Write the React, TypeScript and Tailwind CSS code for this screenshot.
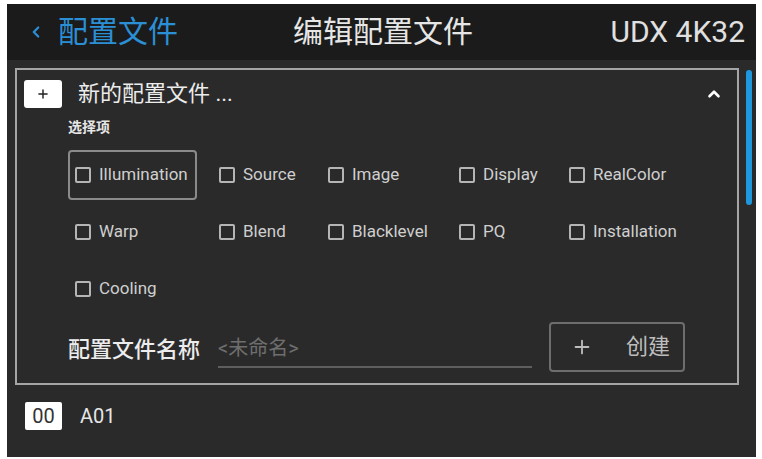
import { ChevronLeft, ChevronUp, Plus } from 'lucide-react';

const font = { fontFamily: 'Roboto, "Noto Sans CJK SC", sans-serif' };

const options = [
  'Illumination',
  'Source',
  'Image',
  'Display',
  'RealColor',
  'Warp',
  'Blend',
  'Blacklevel',
  'PQ',
  'Installation',
  'Cooling'
];

function Option({ label, focused }: { label: string; focused?: boolean }) {
  return (
    <div
      className={`flex h-[50px] items-center gap-[8px] rounded-[4px] border-2 pl-[5px] pr-[7px] ${
        focused ? 'border-[#8a8a8a]' : 'border-transparent'
      }`}
    >
      <span className="h-[16px] w-[16px] shrink-0 rounded-[2px] border-2 border-[#b5b5b5]" />
      <span className="text-[17px] text-[#cfcfcf]">{label}</span>
    </div>
  );
}

export default function App() {
  return (
    <div className="h-[459px] w-[762px] bg-white pl-[7px] pt-[4px]" style={font}>
      <div className="flex h-[453px] w-[749px] flex-col bg-[#2a2a2a]">
        {/* header */}
        <div className="grid h-[56px] grid-cols-[1fr_auto_1fr] items-center bg-[#1b1b1b] pl-[20px] pr-[11px]">
          <div className="flex items-center gap-[13px] text-[#2b8fd6]">
            <ChevronLeft size={18} strokeWidth={3} />
            <span className="text-[30px] leading-none">配置文件</span>
          </div>
          <div className="-ml-[6px] text-[30px] leading-none text-[#e6e6e6]">编辑配置文件</div>
          <span className="justify-self-end text-[30px] leading-none text-[#e0e0e0]">UDX 4K32</span>
        </div>

        {/* body */}
        <div className="flex pl-[8px] pt-[8px]">
          <div className="flex h-[317px] w-[724px] flex-col border-2 border-[#a5a5a5] pl-[7px] pr-[14px] pt-[10px]">
            <div className="flex items-center">
              <div className="flex h-[28px] w-[38px] items-center justify-center rounded-[3px] bg-white text-[#222]">
                <Plus size={14} strokeWidth={2.5} />
              </div>
              <span className="ml-[16px] text-[22px] leading-none text-[#ececec]">新的配置文件 ...</span>
              <ChevronUp size={18} strokeWidth={3.5} className="ml-auto text-white" />
            </div>
            <div className="ml-[44px] mt-[12px] text-[14px] font-bold leading-none text-[#e6e6e6]">选择项</div>
            <div className="ml-[44px] mt-[16px] grid grid-cols-[144px_109px_131px_110px_auto] justify-items-start gap-y-[7px]">
              {options.map((o, i) => (
                <Option key={o} label={o} focused={i === 0} />
              ))}
            </div>
            <div className="ml-[44px] mt-[8px] flex items-start">
              <span className="mt-[17px] text-[22px] font-medium leading-none text-[#ececec]">配置文件名称</span>
              <div className="ml-[18px] mt-[16px] w-[314px] border-b-2 border-[#5e5e5e] pb-[8px] text-[20px] leading-none text-[#6e6e6e]">
                &lt;未命名&gt;
              </div>
              <div className="ml-[17px] flex h-[50px] w-[136px] items-center rounded-[4px] border-2 border-[#6d6d6d] pl-[20px] text-[#bdbdbd]">
                <Plus size={22} strokeWidth={2} />
                <span className="ml-[33px] text-[22px] leading-none">创建</span>
              </div>
            </div>
          </div>
          <div className="ml-[7px] mt-[2px] h-[135px] w-[6px] rounded-full bg-[#1f97dd]" />
        </div>

        {/* list */}
        <div className="flex items-center pl-[18px] pt-[17px]">
          <div className="flex h-[28px] w-[37px] items-center justify-center rounded-[2px] bg-white text-[20px] leading-none text-[#333]">
            00
          </div>
          <span className="ml-[18px] text-[20px] leading-none text-[#e6e6e6]">A01</span>
        </div>
      </div>
    </div>
  );
}
